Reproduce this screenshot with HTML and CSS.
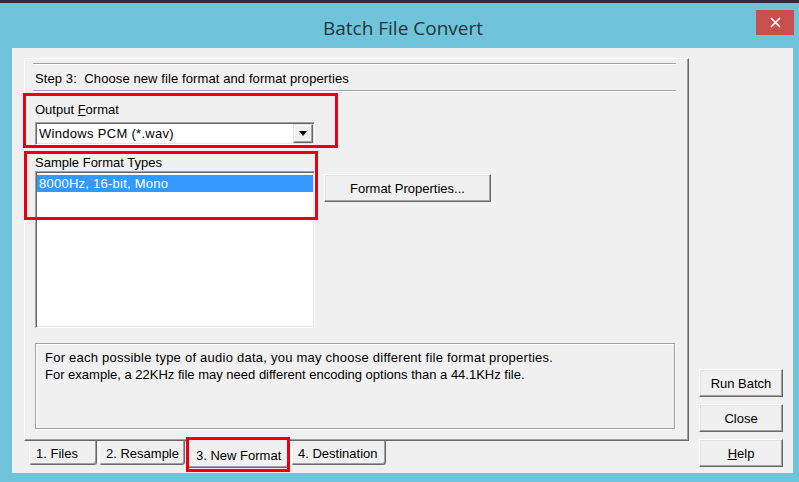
FILE: index.html
```html
<!DOCTYPE html>
<html>
<head>
<meta charset="utf-8">
<title>Batch File Convert</title>
<link rel="stylesheet" href="styles.css">
</head>
<body>
<div class="window">
  <div class="topstrip"></div>
  <header class="titlebar">
    <h1 class="title">Batch File Convert</h1>
    <div class="close"><svg width="11" height="11" viewBox="0 0 11 11"><path d="M1 1L10 10M10 1L1 10" stroke="#fff" stroke-width="1.7"/></svg></div>
  </header>
  <div class="client">
    <div class="sheet">
      <section class="page">
        <div class="step">Step 3:&nbsp; Choose new file format and format properties</div>
        <div class="body">
          <div class="label">Output <u>F</u>ormat</div>
          <div class="combo">
            <span class="combo-text">Windows PCM (*.wav)</span>
            <span class="drop"><svg width="8" height="5" viewBox="0 0 8 5"><path d="M0 0H8L4 5Z" fill="#000"/></svg></span>
          </div>
          <div class="label label-types">Sample Format Types</div>
          <div class="row">
            <div class="listbox"><div class="item selected">8000Hz, 16-bit, Mono</div></div>
            <button class="btn fmt">Format Properties...</button>
          </div>
          <div class="info">
            <p class="wide">For each possible type of audio data, you may choose different file format properties.</p>
            <p>For example, a 22KHz file may need different encoding options than a 44.1KHz file.</p>
          </div>
        </div>
      </section>
      <nav class="tabs">
        <div class="tab t1">1. Files</div>
        <div class="tab t2">2. Resample</div>
        <div class="tab t3 active">3. New Format</div>
        <div class="tab t4">4. Destination</div>
      </nav>
    </div>
    <div class="actions">
      <button class="btn act">Run Batch</button>
      <button class="btn act">Close</button>
      <button class="btn act"><u>H</u>elp</button>
    </div>
  </div>
  <div class="annot a1"></div>
  <div class="annot a2"></div>
  <div class="annot a3"></div>
</div>
</body>
</html>
```
FILE: styles.css
```css
* { box-sizing: border-box; }
html, body { margin: 0; padding: 0; }
body {
  font-family: "Liberation Sans", Arial, sans-serif;
  font-size: 13px;
  line-height: 15px;
  color: #000;
  background: #70c4d9;
}
.window {
  position: relative;
  width: 799px;
  height: 482px;
  background: #70c4d9;
  display: flex;
  flex-direction: column;
  overflow: hidden;
}
.topstrip { height: 3px; background: #2d2e33; }
.titlebar {
  height: 45px;
  display: grid;
  grid-template-columns: 1fr auto 1fr;
  align-items: start;
  padding: 0 5px 0 12px;
}
.title {
  grid-column: 2;
  margin: 13px 0 0;
  font: 400 19px/24px "Open Sans", "Noto Sans", sans-serif;
  color: #24343c;
}
.close {
  grid-column: 3;
  justify-self: end;
  margin-top: 7px;
  width: 38px;
  height: 25px;
  background: #c7504c;
  display: flex;
  align-items: center;
  justify-content: center;
}
.client {
  flex: 1;
  margin: 0 6px 9px 12px;
  background: #f0f0f0;
  display: flex;
  padding: 10px 10px 0 12px;
}
.sheet { width: 665px; display: flex; flex-direction: column; }
.page {
  height: 383px;
  border: 1px solid;
  border-color: #fff #696969 #696969 #fff;
  box-shadow: inset -1px -1px #a0a0a0;
  padding: 4px 12px 0 8px;
  position: relative;
  z-index: 1;
}
.step {
  height: 28px;
  border-top: 1px solid #a0a0a0;
  border-bottom: 1px solid #a0a0a0;
  box-shadow: inset 0 1px #fff, 0 1px #fff;
  padding: 7px 0 0 2px;
  letter-spacing: 0.1px;
}
.body { padding-left: 2px; }
.label { margin-top: 11px; }
.label-types { margin-top: 10px; }
.combo {
  margin-top: 5px;
  width: 280px;
  height: 23px;
  background: #fff;
  border: 1px solid;
  border-color: #a0a0a0 #fff #fff #a0a0a0;
  box-shadow: inset 1px 1px #696969, inset -1px -1px #e3e3e3;
  padding: 1px 1px 1px 3px;
  display: flex;
  align-items: center;
}
.combo-text { flex: 1; letter-spacing: 0.3px; }
.drop {
  width: 20px;
  height: 19px;
  background: #f0f0f0;
  border: 1px solid;
  border-color: #e3e3e3 #696969 #696969 #e3e3e3;
  box-shadow: inset -1px -1px #a0a0a0, inset 1px 1px #fff;
  display: flex;
  align-items: center;
  justify-content: center;
}
.row { display: flex; align-items: flex-start; margin-top: 1px; }
.listbox {
  width: 280px;
  height: 157px;
  background: #fff;
  border: 1px solid;
  border-color: #a0a0a0 #fff #fff #a0a0a0;
  box-shadow: inset 1px 1px #696969, inset -1px -1px #e3e3e3;
  padding: 3px 1px 0 1px;
}
.item { height: 17px; line-height: 17px; padding-left: 2px; letter-spacing: 0.25px; }
.item.selected { background: #3399ff; color: #fff; }
.btn {
  font: inherit;
  color: #000;
  background: #f0f0f0;
  border: 1px solid;
  border-color: #fff #696969 #696969 #fff;
  box-shadow: inset -1px -1px #a0a0a0, inset 1px 1px #e3e3e3;
  padding: 0;
  height: 28px;
  text-align: center;
}
.fmt { margin: 3px 0 0 9px; width: 167px; }
.info {
  margin-top: 15px;
  width: 640px;
  height: 86px;
  border: 1px solid #a0a0a0;
  box-shadow: inset 1px 1px #fff, 1px 1px #fff;
  padding: 5px 9px;
  line-height: 17px;
}
.info p { margin: 0; }
.info .wide { letter-spacing: 0.24px; }
.tabs {
  display: flex;
  gap: 2px;
  padding-left: 5px;
  height: 25px;
  align-items: flex-start;
}
.tab {
  height: 24px;
  background: #f0f0f0;
  border-left: 1px solid #fff;
  border-right: 1px solid #696969;
  border-bottom: 1px solid #696969;
  box-shadow: inset -1px -1px #a0a0a0;
  border-radius: 0 0 3px 3px;
  padding: 5px 0 0 6px;
  white-space: nowrap;
}
.t1 { width: 68px; }
.t2 { width: 86px; }
.t3 { width: 102px; }
.t4 { width: 95px; }
.tab.active {
  margin-top: -2px;
  height: 29px;
  padding-top: 9px;
  padding-left: 8px;
  position: relative;
  z-index: 2;
}
.actions {
  display: flex;
  flex-direction: column;
  justify-content: flex-end;
  gap: 7px;
  margin-left: 10px;
  padding-bottom: 6px;
  width: 84px;
}
.act { width: 84px; }
.annot {
  position: absolute;
  border: 3px solid #e8000f;
  z-index: 5;
}
.a1 { left: 23px; top: 93px; width: 315px; height: 55px; }
.a2 { left: 24px; top: 151px; width: 294px; height: 69px; }
.a3 { left: 186px; top: 437px; width: 104px; height: 35px; }
```
